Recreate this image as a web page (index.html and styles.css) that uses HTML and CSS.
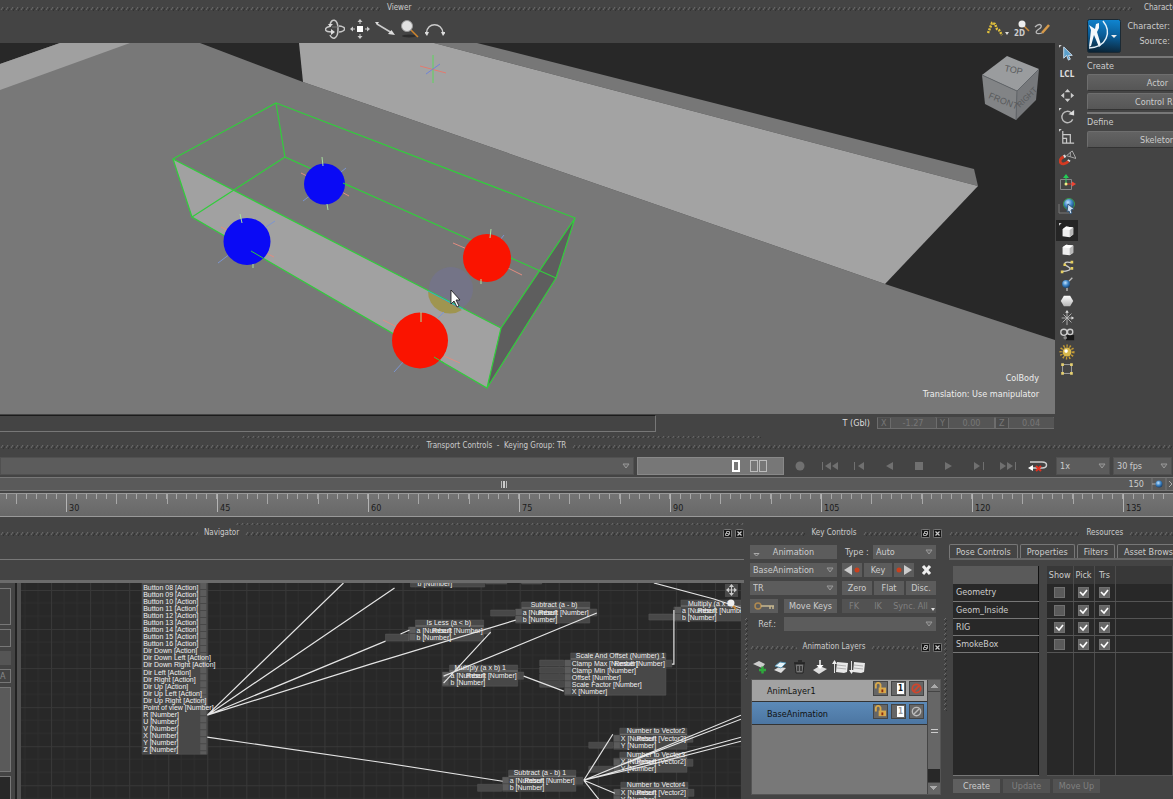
FILE: index.html
```html
<!DOCTYPE html>
<html lang="en">
<head>
<meta charset="utf-8">
<title>Viewer</title>
<link rel="stylesheet" href="styles.css">
</head>
<body>
<svg class="defs" width="0" height="0" aria-hidden="true">
  <defs>
    <linearGradient id="metal" x1="0" y1="0" x2="0" y2="1"><stop offset="0" stop-color="#fff"/><stop offset="1" stop-color="#b5b5b5"/></linearGradient>
    <linearGradient id="sky" x1=".6" y1="0" x2=".5" y2="1"><stop offset="0" stop-color="#0f84cf"/><stop offset=".5" stop-color="#0a5c96"/><stop offset="1" stop-color="#0b2436"/></linearGradient>
    <radialGradient id="ball" cx=".4" cy=".35" r=".7"><stop offset="0" stop-color="#c4e4ff"/><stop offset=".5" stop-color="#3f86c8"/><stop offset="1" stop-color="#123a66"/></radialGradient>
    <symbol id="cube" viewBox="0 0 14 14"><path d="M1 4l4-3 8 1v8l-4 3-8-1z" fill="#eee"/><path d="M1 4l8 1 4-3-8-1z" fill="#fff"/><path d="M9 5l4-3v8l-4 3z" fill="#b8b8b8"/></symbol>
    <symbol id="restore" viewBox="0 0 9 9"><rect x=".5" y=".5" width="8" height="8" rx="1" fill="#151515" stroke="#777"/><path d="M3.500 4V2.500h3v3H5M2.500 4.500h3v2h-3z" fill="none" stroke="#aaa"/></symbol>
    <symbol id="close" viewBox="0 0 9 9"><rect x=".5" y=".5" width="8" height="8" rx="1" fill="#151515" stroke="#777"/><path d="M2.500 2.500l4 4M6.500 2.500l-4 4" stroke="#ccc" stroke-width="1.200"/></symbol>
    <symbol id="lock" viewBox="0 0 14 14"><path d="M2 7V4a2.500 2.500 0 0 1 5-1v4" fill="none" stroke="#d9a94a" stroke-width="2"/><rect x="5" y="6" width="8" height="6" fill="#d9a94a"/><rect x="8" y="8" width="2" height="3" fill="#8a2b10"/></symbol>
    <symbol id="stack" viewBox="0 0 16 14"><path d="M5 2l11 1-1 9-3 1-8-1z" fill="#e8e8e8"/><path d="M5 5l9 1M5 8l9 1" stroke="#b0b0b0" fill="none"/></symbol>
  </defs>
</svg>
<main class="app">
  <section class="upper">
    <div class="viewer">
      <header class="title"><i class="dots g38"></i><h2>Viewer</h2><i class="dots g66"></i></header>
      <div class="viewer-body">
        <div class="stage">
          <div class="toolbar">
            <i class="g33"></i>
            <div class="tools">
              <button aria-label="Orbit"><svg viewBox="0 0 20 20"><g fill="none" stroke="#c8c8c8" stroke-width="1.500"><path d="M6 7C-2 9-1 13 7 13M14 7c8 1 7 5 0 6"/><path d="M5 6C6-1 13-1 13 10s-6 11-8 6"/></g><path d="M6 10l4 3-4 3zM3 5h5l-3 3z" fill="#ddd"/><path d="M7 8h6" stroke="#777"/></svg></button>
              <button aria-label="Pan"><svg viewBox="0 0 20 20"><path d="M7 7h6v6H7z" fill="#fff"/><path d="M10 0l2.500 3h-5zM10 20l2.500-3h-5zM0 10l3-2.500v5zM20 10l-3-2.500v5z" fill="#ccc"/><path d="M10 2v3M10 15v3M2 10h3M15 10h3" stroke="#ccc"/></svg></button>
              <button aria-label="Dolly"><svg viewBox="0 0 20 20"><path d="M2 5l15 9" stroke="#ccc" stroke-width="1.500"/><path d="M0 3h4L2 6zM20 16l-7-1 3.500-4z" fill="#ddd"/></svg></button>
              <button aria-label="Zoom"><svg viewBox="0 0 20 20"><ellipse cx="9" cy="17" rx="7" ry="1.500" fill="#2c2c2c"/><path d="M11 11l7 7" stroke="#d0852c" stroke-width="1.500"/><circle cx="7" cy="7" r="5.500" fill="#e2e2e2" stroke="#999"/></svg></button>
              <button aria-label="Roll"><svg viewBox="0 0 20 20"><path d="M1.500 14C2 3 17 3 18 14" fill="none" stroke="#ccc" stroke-width="1.500"/><path d="M-1 13h5l-2 4zM16 13h5l-3 4z" fill="#ddd"/></svg></button>
            </div>
            <i class="g55"></i>
            <div class="tools small">
              <button aria-label="Trajectory"><svg viewBox="0 0 24 20"><path d="M2 14L6 4l3 1 2 5 2 1 3 5" fill="none" stroke="#e2c13c" stroke-width="2.500" stroke-dasharray="2 1"/><path d="M19 13h4l-2 3z" fill="#ddd"/></svg></button>
              <button class="zoom2d"><svg viewBox="0 0 16 20" aria-hidden="true"><path d="M10 7l5 5" stroke="#c98a3a" stroke-width="1.500"/><circle cx="8" cy="5" r="3.500" fill="#eee"/></svg><span>2D</span></button>
              <button aria-label="Draw"><svg viewBox="0 0 16 20"><path d="M1 8c5-5 9-1 4 2-5 3-3 6 3 4" fill="none" stroke="#bbb" stroke-width="1.300"/><path d="M8 14l7-8" stroke="#d69a4a" stroke-width="2.500"/></svg></button>
            </div>
          </div>
          <div class="viewport">
            <svg class="scene" viewBox="0 43 1055 370" preserveAspectRatio="xMidYMid slice" role="img" aria-label="Perspective view">
              <rect x="0" y="43" width="1055" height="370" fill="#282828"/>
              <path d="M0 64L60 43H200L303 82 885 284l170 56v73H0z" fill="#787878"/>
              <path d="M0 64L60 43H130L0 90z" fill="#a0a0a0"/>
              <path d="M434 43h43l497 126 4 17z" fill="#777"/>
              <path d="M299 43h135L978 186 885 284 303 82z" fill="#a3a3a3"/>
              <path d="M276 103L575 218 501 328 173 159z" fill="#767676"/>
              <path d="M173 159L501 328 487 388 192 217z" fill="#a1a1a1"/>
              <path d="M575 218L556 278 487 388 501 328z" fill="#5e5e5e"/>
              <circle cx="451" cy="289" r="22" fill="#74748e" opacity=".7"/>
              <path d="M428 291a22 22 0 0 0 34 19z" fill="#9f9550"/>
              <g fill="none" stroke="#32cd3c" stroke-width="1.200"><path d="M276 103L575 218 501 328 173 159zM173 159l19 58 295 171 14-60M276 103l9 54 271 121 19-60M192 217l93-60M487 388l69-110"/></g>
              <path d="M428 291l35 18" stroke="#35b5c5"/>
              <g stroke="#7c95d0"><path d="M303 201l8-6M341 172l5-4M218 263l12-9M266 227l9-6M394 372l11-12M438 318l6-6M500 240l4-5"/></g>
              <g stroke="#e28c80"><path d="M301 173l6 3M340 191l9 5M221 227l6 3M264 252l10 5M453 243l14 6M508 268l14 7M383 320l12 6M444 356l16 7"/></g>
              <circle cx="324.500" cy="184" r="20.500" fill="#0a0af5"/>
              <circle cx="247" cy="241.500" r="23.500" fill="#0a0af5"/>
              <circle cx="487" cy="258" r="24" fill="#fa1400"/>
              <circle cx="420" cy="340.500" r="28" fill="#fa1400"/>
              <path d="M322 157l1 9M327 204l1 6M240 214l2 9M253 264v4M491 229l-1 9M481 279v5M421 312v10" stroke="#a8e0a0"/>
              <path d="M434 357l10 6M251 251l12 7M343 183l8 4" stroke="#32cd3c"/>
              <path d="M433 55v28" stroke="#5cd65c"/><path d="M420 66l26 7" stroke="#e27b70"/><path d="M426 74l14-10" stroke="#6f84d8"/>
              <path d="M451 290v14l3-3 3 6 2-1-3-6h4z" fill="#fff" stroke="#111" stroke-width=".8"/>
              <g class="cube"><path d="M1007 56l32 13-22 22-35-16z" fill="#9a9c9e"/><path d="M982 75l35 16-1 29-31-16z" fill="#828486"/><path d="M1017 91l22-22-3 31-20 20z" fill="#76787b"/><path d="M982 75l35 16 22-22M1017 91l-1 29" fill="none" stroke="#62666a"/><text x="1004" y="71" transform="rotate(12 1004 71)">TOP</text><text x="988" y="98" transform="rotate(22 988 98)">FRONT</text><text x="1020" y="108" class="side" transform="rotate(-45 1020 108)">RIGHT</text></g>
            </svg>
            <div class="hud"><p>ColBody</p><p>Translation: Use manipulator</p></div>
          </div>
          <div class="status">
            <input class="message" aria-label="Message">
            <div class="coords">
              <span class="lead">T (Gbl)</span>
              <label>X<input value="-1.27"></label><label>Y<input value="0.00"></label><label>Z<input value="0.04"></label>
            </div>
          </div>
        </div>
        <div class="strip">
          <div class="grp a">
            <button aria-label="Select"><svg viewBox="0 0 18 18"><path d="M0 0h3L0 3z" fill="#ccc"/><path d="M5 2v12l3-3 2 5 2-1-2-4h4z" fill="#5aa0cc" stroke="#cde"/></svg></button>
            <button class="lcl">LCL</button>
            <button aria-label="Move"><svg viewBox="0 0 18 18"><path d="M9 2l3 3.500H6zM9 16l3-3.500H6zM2 9l3.500-3v6zM16 9l-3.500-3v6z" fill="#ccc"/></svg></button>
            <button aria-label="Rotate"><svg viewBox="0 0 18 18"><path d="M0 0h3L0 3z" fill="#ccc"/><path d="M14.500 12A6 6 0 1 1 13 5" fill="none" stroke="#bbb" stroke-width="1.500"/><path d="M10 6.500l6-4.500v6z" fill="#ddd"/></svg></button>
            <button aria-label="Scale"><svg viewBox="0 0 18 18"><path d="M0 0h3L0 3z" fill="#ccc"/><path d="M4 2v13h12M4 6h8v9M8 15v-5H4" fill="none" stroke="#c8c8c8" stroke-width="1.300"/></svg></button>
            <button aria-label="Snap"><svg viewBox="0 0 18 18"><path d="M5 7C-3 11 3 19 10 12" fill="none" stroke="#d33a22" stroke-width="3"/><path d="M5 7l2-1M10 12l1-1.500" stroke="#ddd" stroke-width="3"/><path d="M8 6l6-5 4 8zM12 2v5" fill="none" stroke="#aaa"/></svg></button>
          </div>
          <div class="grp b">
            <button aria-label="Pivot"><svg viewBox="0 0 18 18"><path d="M2.500 5.500h11v10h-11z" fill="none" stroke="#888"/><path d="M8 10V2" stroke="#3c6"/><path d="M8 10h8" stroke="#d32"/><path d="M8 0l3 4H5z" fill="#2c5"/><path d="M18 10l-4-2.500v5z" fill="#e43"/><circle cx="8" cy="10" r="1.500" fill="#ee8"/></svg></button>
            <button aria-label="World"><svg viewBox="0 0 18 18"><path d="M1 7v9h11" fill="none" stroke="#777"/><circle cx="11" cy="7" r="5.500" fill="url(#ball)" stroke="#3c9a4c"/><path d="M10 7l6 5-3 1 1 3-2 1-1-3-2 1z" fill="#cde" stroke="#357"/></svg></button>
          </div>
          <div class="grp c">
            <button class="on" aria-label="Solid"><svg viewBox="0 0 18 18"><use href="#cube" x="3" y="3" width="14" height="14"/><path d="M0 0h3L0 3z" fill="#ccc"/></svg></button>
            <button aria-label="Cube"><svg viewBox="0 0 18 18"><use href="#cube" x="3" y="2" width="14" height="14"/></svg></button>
            <button aria-label="Path"><svg viewBox="0 0 18 18"><path d="M14 4C5 2 5 6 9 8s7 5-5 6" fill="none" stroke="#ccc" stroke-width="1.500"/><path d="M13 2h3v3h-3zM5 5h3v3H5zM13 9h3v3h-3zM2 13h3v3H2z" fill="#e6cf60"/></svg></button>
            <button aria-label="Joint"><svg viewBox="0 0 18 18"><path d="M9 8l6-6M9 10v7" stroke="#bbb" stroke-width="1.500"/><circle cx="8" cy="9" r="4.500" fill="url(#ball)"/></svg></button>
            <button aria-label="Polygon"><svg viewBox="0 0 18 18"><path d="M2 9l3.500-6h7L16 9l-3.500 6h-7z" fill="url(#metal)"/></svg></button>
            <button aria-label="Null"><svg viewBox="0 0 18 18"><path d="M9 2v15M3 9h12M4 14L14 4M5 5l9 9" stroke="#bbb"/><path d="M14 7l3 2-3 2zM9 0l2 3H7z" fill="#ddd"/></svg></button>
            <button aria-label="Camera"><svg viewBox="0 0 18 18"><path d="M7 9h10v6H8z" fill="#181818"/><g fill="#444" stroke="#ccc" stroke-width="1.500"><circle cx="5.500" cy="6" r="3.500"/><circle cx="12.500" cy="5.500" r="3"/></g><circle cx="7" cy="12" r="2" fill="#888"/></svg></button>
            <button aria-label="Light"><svg viewBox="0 0 18 18"><circle cx="9" cy="9" r="7" fill="none" stroke="#c49a34" stroke-width="3" stroke-dasharray="1.500 2"/><circle cx="9" cy="9" r="5" fill="#d8b84a"/><circle cx="8" cy="8" r="2" fill="#fff"/></svg></button>
            <button aria-label="Bounds"><svg viewBox="0 0 18 18"><path d="M4 4h10v10H4z" fill="none" stroke="#aaa"/><path d="M2.500 2.500h3v3h-3zM12.500 2.500h3v3h-3zM2.500 12.500h3v3h-3zM12.500 12.500h3v3h-3z" fill="#e6d070"/></svg></button>
          </div>
        </div>
      </div>
    </div>
    <aside class="character">
      <header class="title"><i class="dots"></i><h2>Character Controls</h2></header>
      <div class="who">
        <button class="logo" aria-label="Character menu"><svg viewBox="0 0 34 34"><rect x=".5" y=".5" width="33" height="33" rx="2" fill="url(#sky)" stroke="#1c2a34"/><path d="M2 6l6 4 1-5 3-1v5l-2 4 4 13-2 2-5-12-3 11-2 1 2-17z" fill="#f2f8fc"/><path d="M16 2c9 11 4 26-14 27" fill="none" stroke="#e4f1fa" stroke-width="1.500"/><path d="M24 16h6l-3 3z" fill="#eee"/></svg></button>
        <div><p>Character:</p><p>Source:</p></div>
      </div>
      <h3>Create</h3>
      <button class="wide">Actor</button>
      <button class="wide">Control Rig</button>
      <h3>Define</h3>
      <button class="wide">Skeleton</button>
    </aside>
  </section>

  <section class="transport">
    <div class="grip"><i class="g24"></i><i class="dots thin g52"></i><i class="g41"></i></div>
    <header class="title"><i class="dots g42"></i><h2>Transport Controls &nbsp;- &nbsp;Keying Group: TR</h2><i class="dots g60"></i></header>
    <div class="controls">
      <select class="take" aria-label="Take"><option></option></select>
      <div class="timecode"><i class="lit"></i><span><i></i><i></i></span></div>
      <div class="play">
        <button aria-label="Record"><svg viewBox="0 0 20 12"><circle cx="10" cy="6" r="4.500"/></svg></button>
        <button aria-label="Start"><svg viewBox="0 0 20 12"><path d="M2 2h1v8H2zM11 2v8L5 6zM18 2v8l-6-4z"/></svg></button>
        <button aria-label="Step back"><svg viewBox="0 0 20 12"><path d="M4 2h1v8H4zM14 2v8L8 6z"/></svg></button>
        <button aria-label="Play back"><svg viewBox="0 0 20 12"><path d="M14 2v8L7 6z"/></svg></button>
        <button aria-label="Stop"><svg viewBox="0 0 20 12"><path d="M6 2h8v8H6z"/></svg></button>
        <button aria-label="Play"><svg viewBox="0 0 20 12"><path d="M6 2v8l7-4z"/></svg></button>
        <button aria-label="Step forward"><svg viewBox="0 0 20 12"><path d="M5 2v8l6-4zM14 2h1v8h-1z"/></svg></button>
        <button aria-label="End"><svg viewBox="0 0 20 12"><path d="M2 2v8l6-4zM9 2v8l6-4zM17 2h1v8h-1z"/></svg></button>
        <button aria-label="Loop"><svg viewBox="0 0 20 12"><path d="M2 2h12c6 0 6 6 0 6H4" fill="none" stroke="#ccc" stroke-width="1.500"/><path d="M0 8l5-3v6z" fill="#fff"/><path d="M8 6l5 5M13 6l-5 5" stroke="#e03020" stroke-width="2"/></svg></button>
      </div>
      <select class="speed" aria-label="Speed"><option>1x</option></select>
      <select class="fps" aria-label="Frame rate"><option>30 fps</option></select>
    </div>
    <div class="range"><i class="g43"></i><i class="handle"></i><i class="g53"></i><span>150</span><svg viewBox="0 0 24 14" width="24" height="14" aria-hidden="true"><path d="M3 0v14M17 0v14" stroke="#777"/><path d="M3 7h5" stroke="#aaa"/><circle cx="10" cy="7" r="3.500" fill="url(#ball)"/><path d="M20 4l3 3-3 3" fill="none" stroke="#aaa"/></svg></div>
    <div class="ruler"><span class="first"></span><span>30</span><span>45</span><span>60</span><span>75</span><span>90</span><span>105</span><span>120</span><span>135</span></div>
  </section>

  <section class="lower">
    <div class="navigator">
      <div class="grip"><i class="g24"></i><i class="dots thin g52"></i></div>
      <header class="title"><i class="dots g20"></i><h2>Navigator</h2><i class="dots g48"></i><button aria-label="Float navigator"><svg><use href="#restore"/></svg></button><button aria-label="Close navigator"><svg><use href="#close"/></svg></button></header>
      <div class="navtabs"></div>
      <div class="navbody">
        <div class="sidecol"><i class="s1"></i><i class="s2"></i><i class="s3"></i><b>A</b><i class="s4"></i><i class="s5"></i></div>
        <svg class="graph" viewBox="21 583 719 216" preserveAspectRatio="xMinYMin slice" role="img" aria-label="Relation graph">
          <defs><pattern id="grid" x="12" y="590" width="39" height="39" patternUnits="userSpaceOnUse"><path d="M13 0v39M26 0v39M0 13h39M0 26h39" stroke="#2e2e2e"/><path d="M.5 0v39M0 .5h39" stroke="#383838"/></pattern></defs>
          <rect x="21" y="583" width="1200" height="900" fill="#282828"/><rect x="21" y="583" width="1200" height="900" fill="url(#grid)"/>
          <g class="box">
            <path d="M142 583h65v171h-65z"/><path d="M410 583h74v4h-74zM485 583h21v1h-21zM521 583h20v1h-20z"/>
            <path d="M415 620h68v21h-75v-14h7zM385 634h23v7h-23zM483 628h7v6h-7z"/>
            <path d="M521 602h68v21h-74v-14h6zM490 610h24v6h-24zM589 609h7v7h-7z"/>
            <path d="M449 665h68v21h-75v-14h7zM517 672h6v7h-6z"/>
            <path d="M570 653h95v42H564v-35h6zM539 660h24v6h-24zM539 667h24v6h-24zM539 674h24v6h-24zM539 681h24v6h-24zM665 660h6v7h-6z"/>
            <path d="M680 600h60v21h-67v-14h7zM648 614h24v6h-24z"/>
            <path d="M619 728h67v21h-73v-14h6zM588 742h24v6h-24zM686 735h6v7h-6z"/>
            <path d="M619 752h67v20h-73v-14h6zM588 766h24v6h-24zM686 759h6v7h-6z"/>
            <path d="M620 782h67v21h-74v-14h7zM687 789h6v7h-6z"/>
            <path d="M508 770h67v21h-73v-14h6zM477 784h24v7h-24zM575 777h7v7h-7z"/>
          </g>
          <path d="M203 583v171M412 627v14M518 609v14M445 672v14M567 660v35M677 607v14M616 735v14M616 759v13M616 789v10M505 777v14" stroke="#5c5c5c" stroke-width="6" stroke-dasharray="6 1"/>
          <path d="M415 626h68M521 608h68M449 671h68M570 659h95M680 606h60M619 734h67M619 758h67M620 788h67M508 776h67" stroke="#777"/>
          <g class="wire"><path d="M207 715L343 583M207 715L394 588M207 715L385 641M400 634l9-4M207 715L370 664 515 620M207 737l173 25 122 19M596 613L443 676M490 632l-47 51M523 676l40 15M671 664h2v-54M653 583l60 16 27 9M583 780l157-65M583 780l29-12 128-49M583 780l157-43M583 780l60-14 97-25M583 780l29-46M583 780l31 13M583 780l15 19"/></g>
          <g class="labels">
            <text x="143" y="590">Button 08 [Action]<tspan x="143" dy="7">Button 09 [Action]</tspan><tspan x="143" dy="7">Button 10 [Action]</tspan><tspan x="143" dy="7">Button 11 [Action]</tspan><tspan x="143" dy="7">Button 12 [Action]</tspan><tspan x="143" dy="7">Button 13 [Action]</tspan><tspan x="143" dy="7">Button 14 [Action]</tspan><tspan x="143" dy="7">Button 15 [Action]</tspan><tspan x="143" dy="7">Button 16 [Action]</tspan><tspan x="143" dy="7">Dir Down [Action]</tspan><tspan x="143" dy="7">Dir Down Left [Action]</tspan><tspan x="143" dy="7">Dir Down Right [Action]</tspan><tspan x="143" dy="8">Dir Left [Action]</tspan><tspan x="143" dy="7">Dir Right [Action]</tspan><tspan x="143" dy="7">Dir Up [Action]</tspan><tspan x="143" dy="7">Dir Up Left [Action]</tspan><tspan x="143" dy="7">Dir Up Right [Action]</tspan><tspan x="143" dy="7">Point of view [Number]</tspan><tspan x="143" dy="7">R [Number]</tspan><tspan x="143" dy="7">U [Number]</tspan><tspan x="143" dy="7">V [Number]</tspan><tspan x="143" dy="7">X [Number]</tspan><tspan x="143" dy="7">Y [Number]</tspan><tspan x="143" dy="7">Z [Number]</tspan></text>
            <text x="417" y="586">b [Number]</text>
            <text x="426" y="625">Is Less (a &lt; b)</text><text x="416" y="633">a [Number]</text><text x="482" y="633" class="end">Result [Number]</text><text x="416" y="640">b [Number]</text>
            <text x="530" y="607">Subtract (a - b)</text><text x="522" y="615">a [Number]</text><text x="588" y="615" class="end">Result [Number]</text><text x="522" y="622">b [Number]</text>
            <text x="454" y="670">Multiply (a x b) 1</text><text x="450" y="678">a [Number]</text><text x="516" y="678" class="end">Result [Number]</text><text x="450" y="685">b [Number]</text>
            <text x="575" y="658">Scale And Offset (Number) 1</text><text x="571" y="666">Clamp Max [Number]</text><text x="664" y="666" class="end">Result [Number]</text><text x="571" y="673">Clamp Min [Number]</text><text x="571" y="680">Offset [Number]</text><text x="571" y="687">Scale Factor [Number]</text><text x="571" y="694">X [Number]</text>
            <text x="687" y="606">Multiply (a x b)</text><text x="681" y="613">a [Number]</text><text x="747" y="613" class="end">Result [Number]</text><text x="681" y="620">b [Number]</text>
            <text x="626" y="733">Number to Vector2</text><text x="620" y="741">X [Number]</text><text x="685" y="741" class="end">Result [Vector2]</text><text x="620" y="748">Y [Number]</text>
            <text x="626" y="757">Number to Vector3</text><text x="620" y="764">X [Number]</text><text x="685" y="764" class="end">Result [Vector2]</text><text x="620" y="771">Y [Number]</text>
            <text x="626" y="787">Number to Vector4</text><text x="620" y="795">X [Number]</text><text x="685" y="795" class="end">Result [Vector2]</text><text x="620" y="802">Y [Number]</text>
            <text x="513" y="775">Subtract (a - b) 1</text><text x="509" y="783">a [Number]</text><text x="574" y="783" class="end">Result [Number]</text><text x="509" y="790">b [Number]</text>
          </g>
          <rect x="724" y="584" width="13" height="13" fill="#4a4a4a"/><path d="M730.500 584l2.500 3h-5zM730.500 596l2.500-3h-5zM725 590l3-2.500v5zM736 590l-3-2.500v5z" fill="#ccc"/><path d="M726 590h9M730.500 586v8" stroke="#ccc"/><path d="M731 604l4 5" stroke="#c98a3a" stroke-width="2"/><circle cx="730" cy="603" r="3.500" fill="#eee"/>
        </svg>
      </div>
    </div>
    <i class="vgrip one"></i>

    <div class="keys">
      <header class="title"><i class="dots"></i><h2>Key Controls</h2><i class="dots"></i><button aria-label="Float key controls"><svg><use href="#restore"/></svg></button><button aria-label="Close key controls"><svg><use href="#close"/></svg></button></header>
      <div class="form">
        <button class="anim">Animation</button><div class="r type"><label for="type">Type :</label><select id="type"><option>Auto</option></select></div>
        <select aria-label="Layer"><option>BaseAnimation</option></select>
        <div class="r four"><button aria-label="Previous key"><svg viewBox="0 0 20 12"><path d="M2 6l8-5v10z" fill="#ccc"/><circle cx="15" cy="6" r="2.500" fill="#c8401e"/></svg></button><button>Key</button><button aria-label="Next key"><svg viewBox="0 0 20 12"><circle cx="5" cy="6" r="2.500" fill="#c8401e"/><path d="M18 6l-8-5v10z" fill="#ccc"/></svg></button><button class="bare" aria-label="Delete key"><svg viewBox="0 0 20 12"><path d="M7 2l7 8M14 2l-7 8" stroke="#eee" stroke-width="3"/></svg></button></div>
        <select aria-label="Keying group"><option>TR</option></select>
        <div class="r three"><button>Zero</button><button>Flat</button><button>Disc.</button></div>
        <div class="kk"><button aria-label="Key options"><svg viewBox="0 0 22 12"><circle cx="5" cy="6" r="3" fill="none" stroke="#b08a50" stroke-width="1.500"/><path d="M8 6h13M17 6v3M20 6v3" fill="none" stroke="#c8b890" stroke-width="1.500"/></svg></button><button>Move Keys</button></div>
        <div class="r sync"><button disabled>FK</button><button disabled>IK</button><button class="more" disabled>Sync. All</button></div>
      </div>
      <div class="ref"><label for="ref">Ref.:</label><select id="ref"><option></option></select></div>
      <header class="title"><i class="dots"></i><h2>Animation Layers</h2><i class="dots"></i><button aria-label="Float layers"><svg><use href="#restore"/></svg></button><button aria-label="Close layers"><svg><use href="#close"/></svg></button></header>
      <div class="layertools">
        <button aria-label="Add layer"><svg viewBox="0 0 16 16"><path d="M1 5l6-3 6 3-3 4z" fill="#ccc"/><path d="M7 11h7M10.500 7.500v7" stroke="#2ea83c" stroke-width="2.500"/></svg></button>
        <button aria-label="Merge layers"><svg viewBox="0 0 16 16"><path d="M2 11l5-3 7 1-5 5z" fill="#ddd"/><path d="M3 7l5-4 6 1-5 5z" fill="#e8f4fa" stroke="#5a97b5"/></svg></button>
        <button aria-label="Delete layer"><svg viewBox="0 0 16 16"><path d="M3 5h9l-1 9H4z" fill="#777" stroke="#222"/><path d="M2 4h11M6 2h4M6 7v5M9 7v5" stroke="#222" stroke-width="1.300"/></svg></button>
        <button aria-label="Flatten"><svg viewBox="0 0 16 16"><path d="M1 11l5-3h4l5 2-8 5z" fill="#ddd"/><path d="M8 1v5" stroke="#ccc" stroke-width="2"/><path d="M4.500 6h7L8 10z" fill="#fff"/></svg></button>
        <button aria-label="Move layer up"><svg viewBox="0 0 16 16"><use href="#stack" width="16" height="14" y="1"/><path d="M2.500 4v10" stroke="#ddd"/><path d="M0 5h5L2.500 1z" fill="#eee"/></svg></button>
        <button class="next" aria-label="Move layer down"><svg viewBox="0 0 16 16"><use href="#stack" width="16" height="14" y="1"/><path d="M2.500 2v9" stroke="#ddd"/><path d="M0 11h5l-2.500 4z" fill="#eee"/></svg></button>
      </div>
      <div class="layers">
        <ul>
          <li><span>AnimLayer1</span><button aria-label="Lock AnimLayer1"><svg viewBox="0 0 14 14"><use href="#lock"/></svg></button><button class="solo"><b>1</b></button><button aria-label="Mute AnimLayer1"><svg viewBox="0 0 14 14"><g fill="none" stroke="#d0452c" stroke-width="2"><circle cx="7" cy="7" r="4.500"/><path d="M4 10l6-6"/></g></svg></button></li>
          <li class="sel"><span>BaseAnimation</span><button aria-label="Lock BaseAnimation"><svg viewBox="0 0 14 14"><use href="#lock"/></svg></button><button class="solo dim"><b>1</b></button><button aria-label="Mute BaseAnimation"><svg viewBox="0 0 14 14"><g fill="none" stroke="#bbb" stroke-width="1.500"><circle cx="7" cy="7" r="4.500"/><path d="M4 10l6-6"/></g></svg></button></li>
        </ul>
        <div class="scroll"><i class="arrow"></i><i class="thumb"></i><i class="track"></i><i class="arrow down"></i></div>
      </div>
    </div>
    <i class="vgrip two"></i>

    <div class="resources">
      <header class="title"><i class="dots g13"></i><h2>Resources</h2><i class="dots g5"></i></header>
      <nav class="tabs"><button>Pose Controls</button><button>Properties</button><button>Filters</button><button>Asset Browser</button></nav>
      <div class="tables">
        <table class="names"><thead><tr><th></th></tr></thead><tbody><tr><td>Geometry</td></tr><tr><td>Geom_Inside</td></tr><tr><td>RIG</td></tr><tr><td>SmokeBox</td></tr><tr class="fill"><td></td></tr></tbody></table>
        <table class="flags"><thead><tr><th>Show</th><th>Pick</th><th>Trs</th><th></th></tr></thead><tbody>
          <tr><td><input type="checkbox" aria-label="Show Geometry"></td><td><input type="checkbox" checked aria-label="Pick Geometry"></td><td><input type="checkbox" checked aria-label="Transform Geometry"></td><td></td></tr>
          <tr><td><input type="checkbox" aria-label="Show Geom_Inside"></td><td><input type="checkbox" checked aria-label="Pick Geom_Inside"></td><td><input type="checkbox" checked aria-label="Transform Geom_Inside"></td><td></td></tr>
          <tr><td><input type="checkbox" checked aria-label="Show RIG"></td><td><input type="checkbox" checked aria-label="Pick RIG"></td><td><input type="checkbox" checked aria-label="Transform RIG"></td><td></td></tr>
          <tr><td><input type="checkbox" aria-label="Show SmokeBox"></td><td><input type="checkbox" checked aria-label="Pick SmokeBox"></td><td><input type="checkbox" checked aria-label="Transform SmokeBox"></td><td></td></tr>
          <tr class="fill"><td></td><td></td><td></td><td></td></tr></tbody></table>
      </div>
      <footer><button>Create</button><button disabled>Update</button><button disabled>Move Up</button></footer>
    </div>
  </section>
</main>
</body>
</html>
```
FILE: styles.css
```css
* { box-sizing: border-box; margin: 0; padding: 0; }
body { background: #444; color: #ccc; font: 9px/12px "DejaVu Sans Condensed", "DejaVu Sans", "Noto Sans", sans-serif; overflow: hidden; }
button, input, select { font: inherit; color: inherit; border: 0; background: none; border-radius: 0; }
button svg { display: block; }
.defs { position: absolute; }
.app { display: flex; flex-direction: column; height: 100vh; }
i { display: block; }

/* flexible spacers used by the title bars and tool rows */
.g5 { flex: 3 1 0 !important; } .g13 { flex: 9 1 0 !important; }
.g20 { flex: 20 1 0 !important; } .g48 { flex: 48 1 0 !important; }
.g24 { flex: 24 1 0; } .g52 { flex: 52 1 0 !important; } .g41 { flex: 41 1 0; }
.g33 { flex: 33 1 0; } .g55 { flex: 55 1 0; }
.g38 { flex: 38 1 0 !important; } .g66 { flex: 66 1 0 !important; }
.g42 { flex: 42 1 0 !important; } .g60 { flex: 60 1 0 !important; }
.g43 { flex: 50 1 0; } .g53 { flex: 62 1 0; }

.title { display: flex; align-items: center; gap: 6px; height: 16px; flex: none; }
.title h2 { font-size: 8px; font-weight: 400; white-space: nowrap; }
.title button { width: 9px; height: 9px; margin-left: -3px; }
.title button svg { width: 9px; height: 9px; }
.dots { flex: 1 1 0; height: 5px; background: url("data:image/svg+xml,%3Csvg xmlns='http://www.w3.org/2000/svg' width='5' height='5'%3E%3Cpath d='M1 4L3 1' stroke='%236c6c6c'/%3E%3Cpath d='M3 5L5 2' stroke='%23303030'/%3E%3C/svg%3E"); }
.dots.thin { height: 3px; }
.grip { display: flex; height: 4px; align-items: center; }
.vgrip { flex: none; width: 3px; height: 62px; margin: 96px 2px 0 1px; background: url("data:image/svg+xml,%3Csvg xmlns='http://www.w3.org/2000/svg' width='3' height='5'%3E%3Cpath d='M0 3L2 1' stroke='%236c6c6c'/%3E%3Cpath d='M1 5L3 3' stroke='%23303030'/%3E%3C/svg%3E"); }
.vgrip.two { height: 94px; }

.upper { display: flex; flex: 1 1 0; min-height: 300px; }
.viewer { flex: 1 1 0; display: flex; flex-direction: column; min-width: 0; }
.viewer-body { display: flex; flex: 1; min-height: 0; }
.stage { flex: 1; display: flex; flex-direction: column; min-width: 0; }
.toolbar { display: flex; align-items: center; height: 27px; flex: none; padding-bottom: 2px; }
.tools { display: flex; gap: 5px; }
.tools svg { width: 20px; height: 20px; }
.tools.small { gap: 4px; margin-right: 5px; }
.tools.small svg { width: auto; }
.zoom2d { display: grid; }
.zoom2d > * { grid-area: 1 / 1; }
.zoom2d span { align-self: end; font-weight: 700; font-size: 8px; line-height: 10px; text-align: left; }
.viewport { flex: 1; min-height: 0; display: grid; border-bottom: 1px solid #777; overflow: hidden; }
.scene { grid-area: 1 / 1; width: 100%; height: 100%; min-height: 0; display: block; }
.cube text { font: 9px "Liberation Sans", sans-serif; fill: #585a5c; }
.cube .side { font-size: 8px; }
.hud { grid-area: 1 / 1; align-self: end; justify-self: end; padding: 0 16px 11px; text-align: right; color: #eee; z-index: 1; }
.hud p { line-height: 16px; }
.status { display: flex; justify-content: space-between; height: 20px; align-items: center; padding: 0 1px 2px 0; flex: none; }
.message { flex: 1; margin-right: 186px; height: 17px; border: 1px solid #777; border-top-color: #1c1c1c; border-left: 0; }
.coords { display: flex; align-items: center; }
.lead { margin-right: 7px; color: #ddd; }
.coords label { display: flex; align-items: center; width: 59px; height: 12px; border: 1px solid #6d6d6d; border-top-color: #555; background: #4c4c4c; color: #777; padding-left: 3px; }
.coords input { width: 46px; height: 10px; margin-left: 3px; background: #555; border-left: 1px solid #6b6b6b; text-align: center; color: #777; }
.strip { width: 24px; flex: none; padding-top: 27px; display: flex; flex-direction: column; align-items: center; }
.grp { display: flex; flex-direction: column; }
.grp button { width: 22px; height: 21px; display: grid; place-items: center; }
.grp svg { width: 17px; height: 17px; }
.grp .lcl { font-weight: 700; font-size: 8px; color: #ddd; }
.grp.b { padding: 2px 0 3px; }
.grp.b button { height: 23px; }
.grp.b svg { width: 18px; height: 18px; }
.grp.c button { height: 17px; }
.grp.c svg { width: 16px; height: 16px; }
.grp.c .on { height: 21px; background: #252525; }

.character { flex: 0 0 94px; overflow: hidden; padding-left: 8px; }
.character > * { width: 141px; }
.character .title { gap: 12px; width: 160px; }
.character .dots { flex: 0 0 45px; }
.who { display: flex; height: 42px; padding-top: 3px; border-bottom: 2px solid #777; }
.who > div { width: 49px; text-align: right; line-height: 15px; }
.who p { line-height: 15px; }
.logo, .logo svg { width: 34px; height: 34px; }
.character h3 { font-weight: 400; font-size: 9px; line-height: 16px; }
.wide { display: block; height: 17px; margin-bottom: 2px; background: linear-gradient(#636363, #565656); border: 1px solid #6e6e6e; border-bottom-color: #333; border-radius: 2px; text-align: center; }
.wide + h3 { border-top: 2px solid #777; line-height: 17px; }

select { appearance: none; height: 14px; line-height: 14px; padding: 0 14px 0 3px; background: #5c5c5c url("data:image/svg+xml,%3Csvg xmlns='http://www.w3.org/2000/svg' width='8' height='6'%3E%3Cpath d='M1 1h6L4 5z' fill='%23666' stroke='%23999'/%3E%3C/svg%3E") no-repeat right 3px center; }
.transport { flex: none; }
.controls { display: flex; align-items: stretch; height: 18px; margin-top: 3px; gap: 3px; }
.controls select { height: 18px; border: 1px solid #505050; }
.take { flex: 1; }
.timecode { width: 147px; background: #777; border: 1px solid #888; display: flex; justify-content: flex-end; align-items: center; gap: 10px; padding-right: 16px; }
.timecode span { display: flex; gap: 1px; }
.timecode i { width: 8px; height: 12px; border: 1px solid #bbb; }
.timecode .lit { border: 2px solid #fff; }
.play { display: flex; width: 266px; justify-content: space-between; padding: 0 5px 0 3px; }
.play button { width: 20px; }
.play svg { width: 20px; height: 12px; fill: #707070; }
.speed { width: 54px; }
.fps { width: 59px; margin-right: 1px; }
.range { display: flex; align-items: center; height: 14px; margin-top: 2px; background: #5a5a5a; border: solid #777; border-width: 1px 0; }
.range svg { margin-left: 5px; }
.handle { width: 6px; height: 7px; border: solid #bbb; border-width: 0 1px; background: linear-gradient(90deg, transparent 1px, #ccc 1px 3px, transparent 3px); }
.ruler { display: flex; height: 24px; margin-top: 2px; overflow: hidden; background: linear-gradient(#747474, #686868); border: solid #999; border-width: 1px 0; color: #1c1c1c; }
.ruler span { flex: 0 0 151px; padding: 8px 0 0 3px; height: 22px; background: linear-gradient(#b4b4b4 0 0) 0 0 / 1px 18px no-repeat, linear-gradient(#a8a8a8 0 0) 50px 0 / 1px 10px no-repeat, linear-gradient(#a8a8a8 0 0) 101px 0 / 1px 10px no-repeat, repeating-linear-gradient(90deg, #a8a8a8 0 1px, transparent 1px 10px) 0 0 / 100% 5px no-repeat; }
.ruler .first { flex-basis: 66px; background: repeating-linear-gradient(270deg, transparent 0 9px, #a8a8a8 9px 10px) 0 0 / 100% 5px no-repeat, linear-gradient(#a8a8a8 0 0) 16px 0 / 1px 10px no-repeat; }

.lower { display: flex; flex: 0 0 282px; min-height: 0; padding-top: 4px; }
.navigator { flex: 1; min-width: 0; display: flex; flex-direction: column; }
.navtabs { height: 42px; flex: none; background: linear-gradient(#777, #777) 0 18px / 100% 1px no-repeat; border-bottom: 3px solid #6b6b6b; }
.navbody { display: flex; flex: 1; min-height: 0; }
.sidecol { width: 21px; flex: none; display: flex; flex-direction: column; gap: 4px; padding: 5px 0 0; border-right: 4px solid #505050; box-shadow: inset -2px 0 #222; }
.sidecol > * { width: 11px; border: 1px solid #777; border-left: 0; flex: none; }
.s1 { height: 37px; } .s2 { height: 18px; } .s3 { height: 14px; background: #555; border: 0 !important; }
.sidecol b { font-weight: 400; color: #888; line-height: 12px; }
.s4 { height: 85px; background: #5a5a5a; } .s5 { height: 24px; background: #282828; }
.graph { flex: 1; min-width: 0; height: 100%; margin-right: 3px; }
.box { fill: #484848; stroke: #5a5a5a; stroke-width: .5; }
.wire { fill: none; stroke: #e4e4e4; stroke-width: 1.2; }
.labels { font: 7px "Liberation Sans", sans-serif; fill: #f0f0f0; }
.end { text-anchor: end; }

.keys { flex: 0 0 193px; padding-top: 4px; display: flex; flex-direction: column; }
.keys .title { padding-right: 1px; }
.keys button { background: #5c5c5c; white-space: nowrap; }
.form { display: grid; grid-template-columns: 87px 94px; column-gap: 5px; row-gap: 4px; padding-top: 4px; }
.form button, .form select { height: 14px; line-height: 14px; display: block; width: 100%; }
.form svg { height: 12px; width: 100%; }
.form .bare { background: none; }
.form .anim { background: #5c5c5c url("data:image/svg+xml,%3Csvg xmlns='http://www.w3.org/2000/svg' width='7' height='4'%3E%3Cpath d='M1 .5h5L3.5 3z' fill='none' stroke='%23aaa'/%3E%3C/svg%3E") no-repeat 3px 8px; }
.r { display: grid; gap: 2px; }
.type { grid-template-columns: 31px 1fr; gap: 0; }
.type label { padding: 1px 0 0 3px; }
.four { grid-template-columns: 20px 1fr 20px 20px; }
.three { grid-template-columns: 1fr 1fr 1fr; }
.kk { display: grid; grid-template-columns: 28px 1fr; gap: 6px; }
.sync { grid-template-columns: 1fr 1fr 46px; gap: 0; }
button:disabled { color: #808080; background: #525252; }
.form .more { padding-right: 5px; background: #525252 url("data:image/svg+xml,%3Csvg xmlns='http://www.w3.org/2000/svg' width='4' height='3'%3E%3Cpath d='M0 0h4L2 3z' fill='%23ddd'/%3E%3C/svg%3E") no-repeat right 1px bottom 2px; }
.ref { display: flex; align-items: center; justify-content: flex-end; gap: 8px; margin: 4px 7px 8px 0; }
.ref select { width: 152px; }
.layertools { display: flex; gap: 4px; padding: 4px 2px; }
.layertools button { background: none; }
.layertools svg { width: 16px; height: 16px; }
.layertools .next { margin-left: -3px; }
.layers { display: flex; flex: 1; margin: 0 2px 4px 1px; border: 1px solid #555; background: #787878; min-height: 0; }
.layers ul { flex: 1; list-style: none; }
.layers li { display: flex; align-items: center; gap: 3px; height: 22px; padding: 0 3px 4px 15px; background: #a2a2a2; border-bottom: 1px solid #333; color: #111; }
.layers li.sel { height: 23px; background: linear-gradient(#5c8ab8, #4c76a2); }
.layers li span { flex: 1; padding-top: 5px; }
.layers li button { width: 15px; height: 15px; background: #666; border: 1px solid #444; }
.layers li svg { width: 13px; height: 13px; }
.solo b { display: block; width: 7px; height: 11px; margin-left: 5px; background: #fff; color: #111; font-size: 8px; line-height: 11px; }
.solo.dim b { color: #999; }
.scroll { width: 13px; display: flex; flex-direction: column; background: #666; border-left: 1px solid #444; }
.arrow { height: 12px; background: conic-gradient(from 135deg at 50% 4px, #aaa 90deg, transparent 0) center 0 / 7px 8px no-repeat; border-bottom: 1px solid #444; }
.arrow.down { transform: rotate(180deg); }
.thumb { flex: 1; background: linear-gradient(#ccc 0 1px, transparent 1px 3px, #ccc 3px 4px) center / 7px 4px no-repeat; }
.track { height: 13px; background: #282828; }

.resources { flex: 0 0 224px; overflow: hidden; padding-top: 4px; display: flex; flex-direction: column; }
.tabs { display: flex; gap: 2px; height: 19px; padding-top: 3px; width: 250px; border-bottom: 2px solid #666; flex: none; }
.tabs button { border: 1px solid #777; border-bottom: 0; border-radius: 2px 2px 0 0; padding: 0 6px; white-space: nowrap; flex: none; }
.tables { display: flex; gap: 8px; padding: 6px 0 0 4px; flex: 1; min-height: 0; }
table { border-collapse: collapse; background: #282828; height: 100%; table-layout: fixed; }
th { font-weight: 400; height: 18px; }
tr { height: 17px; } .fill { height: auto; }
td { border-bottom: 1px solid #555; }
.names { width: 86px; border-right: 1px solid #111; }
.names th { background: #5a5a5a; }
.names td { padding-left: 3px; border-bottom-color: #777; }
.flags { flex: 1; }
.flags th { background: #383838; border-right: 1px solid #4c4c4c; }
.flags td { border-right: 1px solid #4c4c4c; text-align: center; }
.flags th:nth-child(1) { width: 26px; }
.flags th:nth-child(2), .flags th:nth-child(3) { width: 21px; }
input[type="checkbox"] { appearance: none; display: inline-block; width: 11px; height: 11px; background: #5a5a5a; border: 1px solid #707070; vertical-align: middle; }
input[type="checkbox"]:checked { background: #666 url("data:image/svg+xml,%3Csvg xmlns='http://www.w3.org/2000/svg' width='9' height='9'%3E%3Cpath d='M1 4l3 3 4-5' fill='none' stroke='%23fff' stroke-width='1.6'/%3E%3C/svg%3E") center no-repeat; }
footer { display: flex; gap: 3px; padding: 3px 0 6px 4px; flex: none; }
footer button { width: 47px; height: 14px; background: #5f5f5f; }
```
